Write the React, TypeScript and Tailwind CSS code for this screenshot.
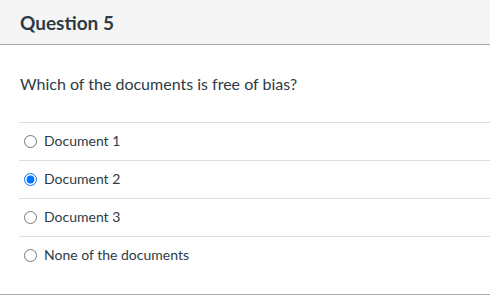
const answers = [
  { id: 1, label: "Document 1" },
  { id: 2, label: "Document 2" },
  { id: 3, label: "Document 3" },
  { id: 4, label: "None of the documents" },
];

export default function App() {
  return (
    <div className="w-[490px] h-[296px] bg-white text-[#2d3b45]" style={{ fontFamily: "Lato, 'Noto Sans', sans-serif" }}>
      <div className="border-b border-[#aaaaaa]">
        <div className="h-[45px] bg-[#f5f5f5] border-b border-[#aaaaaa] flex items-center px-5">
          <h2 className="text-[19px] font-bold leading-none">Question 5</h2>
        </div>
        <div className="h-[77px] flex items-center px-5">
          <p className="text-[16px]">Which of the documents is free of bias?</p>
        </div>
        <div className="pl-[19px] pb-[20px]">
          {answers.map((a) => (
            <label key={a.id} className="h-[38px] border-t border-[#dddddd] flex items-center gap-[7px] pl-[5px]">
              <input type="radio" name="q5" defaultChecked={a.id === 2} className="m-0 w-[13px] h-[13px]" />
              <span className="text-[14px] mb-[2px]">{a.label}</span>
            </label>
          ))}
        </div>
      </div>
    </div>
  );
}
